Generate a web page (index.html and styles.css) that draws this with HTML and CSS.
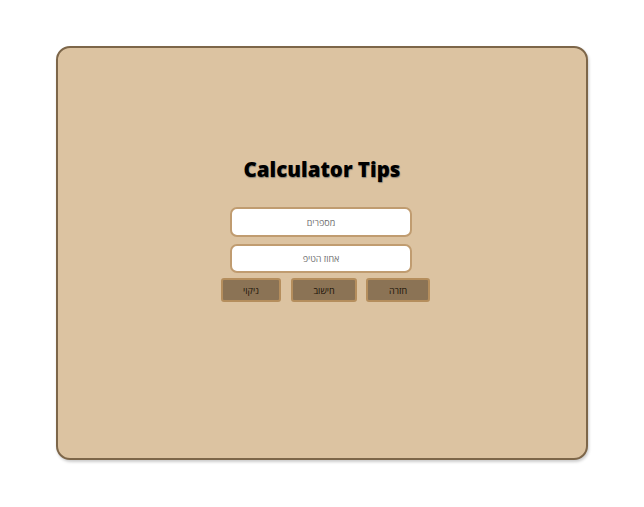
FILE: index.html
```html
<!DOCTYPE html>
<html lang="he">
<head>
<meta charset="utf-8">
<link rel="stylesheet" href="styles.css">
</head>
<body>
<div class="card">
  <h1 class="title">Calculator Tips</h1>
  <div class="form">
    <input class="field" type="text" placeholder="מספרים" dir="rtl">
    <input class="field" type="text" placeholder="אחוז הטיפ" dir="rtl">
    <div class="buttons">
      <button class="btn btn-clear">ניקוי</button>
      <button class="btn btn-calc">חישוב</button>
      <button class="btn btn-back">חזרה</button>
    </div>
  </div>
</div>
</body>
</html>
```
FILE: styles.css
```css
html, body {
  margin: 0;
  padding: 0;
  background: #ffffff;
}
body {
  width: 644px;
  height: 507px;
  display: flex;
  align-items: flex-start;
  justify-content: center;
  font-family: "Open Sans", "Noto Sans", sans-serif;
}
.card {
  box-sizing: border-box;
  margin-top: 46px;
  width: 532px;
  height: 414px;
  background: #dcc3a1;
  border: 2px solid #7d6649;
  border-radius: 14px;
  box-shadow: 1px 2px 3px rgba(0,0,0,0.2);
  display: flex;
  flex-direction: column;
  align-items: center;
  padding-top: 106px;
}
.title {
  margin: 0;
  font-size: 20.5px;
  font-weight: 800;
  line-height: 30px;
  color: #000;
  text-shadow: 0.5px 0.5px 1px rgba(30,50,70,0.45);
}
.form {
  margin-top: 23px;
  display: flex;
  flex-direction: column;
  align-items: center;
}
.field {
  box-sizing: border-box;
  width: 182px;
  height: 30px;
  margin-bottom: 7px;
  margin-right: 2px;
  border: 2px solid #c09c70;
  border-radius: 7px;
  background: #fff;
  text-align: center;
  font-family: "Noto Sans", "Open Sans", sans-serif;
  font-size: 9px;
  outline: none;
}
.field::placeholder {
  color: #707070;
}
.field + .field {
  margin-bottom: 5px;
  height: 29px;
}
.buttons {
  display: flex;
  gap: 9px;
  margin-left: 7px;
}
.btn {
  box-sizing: border-box;
  height: 24px;
  background: #8b7355;
  border: 2px solid #b58e5d;
  border-radius: 3px;
  color: #1a1208;
  font-family: "Noto Sans", "Open Sans", sans-serif;
  font-size: 9px;
  font-weight: 500;
  padding: 0;
}
.btn-clear { width: 60px; margin-right: 1px; }
.btn-calc { width: 66px; }
.btn-back { width: 64px; }
```
